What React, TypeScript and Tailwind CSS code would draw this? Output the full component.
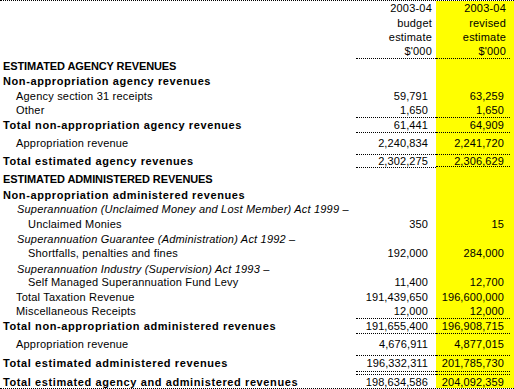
type Row = {
  label: string;
  kind: "head" | "sub" | "item" | "item2" | "ital";
  budget?: string;
  revised?: string;
  h: string;
  pt: string;
  line?: boolean;
};

const rows: Row[] = [
  { label: "ESTIMATED AGENCY REVENUES", kind: "head", h: "h-[15px]", pt: "pt-0" },
  { label: "Non-appropriation agency revenues", kind: "sub", h: "h-[14px]", pt: "pt-0" },
  { label: "Agency section 31 receipts", kind: "item", budget: "59,791", revised: "63,259", h: "h-[15px]", pt: "pt-[1px]" },
  { label: "Other", kind: "item", budget: "1,650", revised: "1,650", h: "h-[15px]", pt: "pt-0", line: true },
  { label: "Total non-appropriation agency revenues", kind: "sub", budget: "61,441", revised: "64,909", h: "h-[15px]", pt: "pt-0", line: true },
  { label: "Appropriation revenue", kind: "item", budget: "2,240,834", revised: "2,241,720", h: "h-[22px]", pt: "pt-[3px]", line: true },
  { label: "Total estimated agency revenues", kind: "sub", budget: "2,302,275", revised: "2,306,629", h: "h-[13px]", pt: "-mt-px", line: true },
  { label: "ESTIMATED ADMINISTERED REVENUES", kind: "head", h: "h-[19px]", pt: "pt-[4px]" },
  { label: "Non-appropriation administered revenues", kind: "sub", h: "h-[15px]", pt: "pt-[1px]" },
  { label: "Superannuation (Unclaimed Money and Lost Member) Act 1999 –", kind: "ital", h: "h-[15px]", pt: "pt-0" },
  { label: "Unclaimed Monies", kind: "item2", budget: "350", revised: "15", h: "h-[15px]", pt: "pt-0" },
  { label: "Superannuation Guarantee (Administration) Act 1992 –", kind: "ital", h: "h-[14px]", pt: "pt-0" },
  { label: "Shortfalls, penalties and fines", kind: "item2", budget: "192,000", revised: "284,000", h: "h-[15px]", pt: "pt-0" },
  { label: "Superannuation Industry (Supervision) Act 1993 –", kind: "ital", h: "h-[14px]", pt: "pt-[1px]" },
  { label: "Self Managed Superannuation Fund Levy", kind: "item2", budget: "11,400", revised: "12,700", h: "h-[15px]", pt: "pt-0" },
  { label: "Total Taxation Revenue", kind: "item", budget: "191,439,650", revised: "196,600,000", h: "h-[14px]", pt: "pt-0" },
  { label: "Miscellaneous Receipts", kind: "item", budget: "12,000", revised: "12,000", h: "h-[15px]", pt: "pt-0", line: true },
  { label: "Total non-appropriation administered revenues", kind: "sub", budget: "191,655,400", revised: "196,908,715", h: "h-[15px]", pt: "pt-0", line: true },
  { label: "Appropriation revenue", kind: "item", budget: "4,676,911", revised: "4,877,015", h: "h-[22px]", pt: "pt-[3px]", line: true },
  { label: "Total estimated administered revenues", kind: "sub", budget: "196,332,311", revised: "201,785,730", h: "h-[16px]", pt: "pt-0", line: true },
];

const labelClass: Record<Row["kind"], string> = {
  head: "pl-[3px] font-bold tracking-[-0.1px]",
  sub: "pl-[3px] font-bold tracking-[0.6px]",
  item: "pl-[16px] tracking-[0.2px]",
  item2: "pl-[28px] tracking-[0.2px]",
  ital: "pl-[17px] italic tracking-[0.2px]",
};

const header = [
  { text: "2003-04", h: "h-[15px]" },
  { text: "budget", h: "h-[14px]", revised: "revised" },
  { text: "estimate", h: "h-[14px]" },
  { text: "$'000", h: "h-[15px]", line: true },
];

export default function App() {
  return (
    <div className="h-[389px] w-[514px] overflow-hidden bg-white font-['Liberation_Sans',Arial,sans-serif] text-[11px] leading-[14px] text-black">
      <div className="border-y border-dotted border-black">
        {header.map((r) => (
          <div key={r.text} className={`flex ${r.h}`}>
            <div className="flex-1" />
            <div
              className={`w-[80px] flex-none pr-[4px] text-right tracking-[0.2px] ${
                r.line ? "border-b border-dotted border-black" : ""
              }`}
            >
              {r.text}
            </div>
            <div className="w-[78px] flex-none bg-[#ffff00]">
              <div
                className={`h-full w-[74px] pr-[4px] text-right tracking-[0.2px] ${
                  r.line ? "border-b border-dotted border-black" : ""
                }`}
              >
                {r.revised ?? r.text}
              </div>
            </div>
          </div>
        ))}

        {rows.map((r, i) => (
          <div key={i} className={`flex ${r.h}`}>
            <div className={`flex-1 whitespace-nowrap ${r.pt} ${labelClass[r.kind]}`}>
              {r.label}
            </div>
            <div
              className={`w-[80px] flex-none pr-[8px] text-right tracking-[0.1px] ${r.pt} ${
                r.line ? "border-b border-dotted border-black" : ""
              }`}
            >
              {r.budget}
            </div>
            <div className="w-[78px] flex-none bg-[#ffff00]">
              <div
                className={`h-full w-[74px] pr-[6px] text-right tracking-[0.1px] ${r.pt} ${
                  r.line ? "border-b border-dotted border-black" : ""
                }`}
              >
                {r.revised}
              </div>
            </div>
          </div>
        ))}

        <div className="flex h-[16px]">
          <div className="flex-1 whitespace-nowrap pl-[3px] pt-[3px] font-bold tracking-[0.6px]">
            Total estimated agency and administered revenues
          </div>
          <div className="w-[80px] flex-none">
            <div className="mt-[2px] border-t border-dotted border-black pr-[8px] text-right tracking-[0.1px]">
              198,634,586
            </div>
          </div>
          <div className="w-[78px] flex-none bg-[#ffff00]">
            <div className="mt-[2px] w-[74px] border-t border-dotted border-black pr-[6px] text-right tracking-[0.1px]">
              204,092,359
            </div>
          </div>
        </div>
      </div>
    </div>
  );
}
